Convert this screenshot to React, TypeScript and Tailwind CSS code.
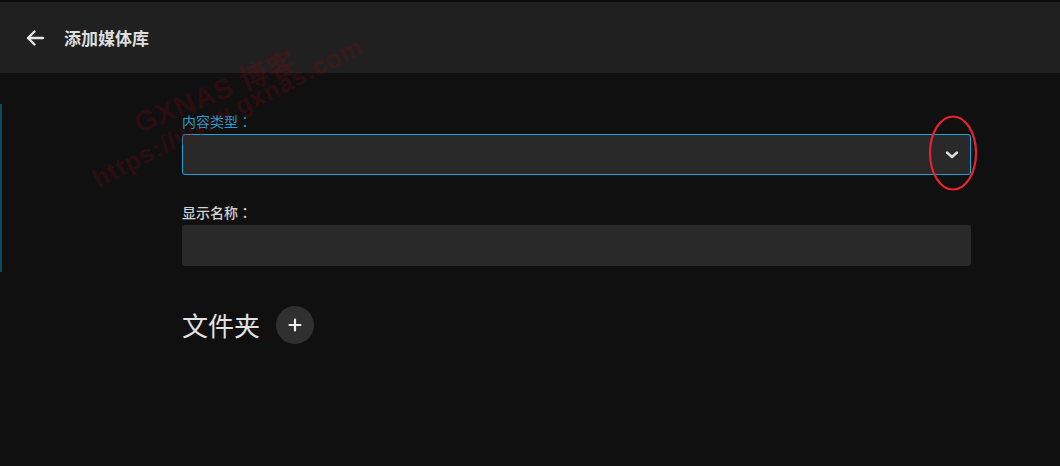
import React from "react";

const cjk = { fontFamily: '"Noto Sans CJK SC", "Noto Sans", sans-serif' };

const Field = ({ label, active }: { label: string; active?: boolean }) => (
  <div className="flex flex-col">
    <div
      className={
        "h-[20px] leading-[20px] text-[14px] mb-[3px] " +
        (active ? "text-[#1ba3d6]" : "text-[#d2d2d2] font-medium")
      }
    >
      {label}
      <span style={{ fontFamily: '"Noto Sans CJK TC", sans-serif' }}>：</span>
    </div>
    <div
      className={
        "h-[41px] rounded-[3px] bg-[#292929] flex items-center justify-end pr-[11px] " +
        (active ? "border border-[#1ba3d6]" : "")
      }
    >
      {active && (
        <svg width="14" height="10" viewBox="0 0 14 10" fill="none">
          <path d="M2 2.5 L7 7 L12 2.5" stroke="#dcdcdc" strokeWidth="2.4" strokeLinecap="round" strokeLinejoin="round" />
        </svg>
      )}
    </div>
  </div>
);

const App = () => {
  return (
    <div className="relative w-[1060px] h-[466px] overflow-hidden bg-[#101010] text-[#e0e0e0]" style={cjk}>
      <div className="h-[2px] bg-[#0c0c0c]" />
      <header className="h-[71px] bg-[#202020] flex items-center">
        <svg className="ml-[25px]" width="20" height="18" viewBox="0 0 20 18" fill="none">
          <path d="M18 9 H3 M9.5 2.5 L3 9 L9.5 15.5" stroke="#e6e6e6" strokeWidth="2.4" strokeLinecap="round" strokeLinejoin="round" />
        </svg>
        <h1 className="ml-[19px] text-[17px] font-semibold text-[#dedede]">添加媒体库</h1>
      </header>

      <main className="pl-[182px] pt-[38px] w-[971px]">
        <Field label="内容类型" active />
        <div className="mt-[27px]">
          <Field label="显示名称" />
        </div>
        <div className="mt-[39px] flex items-center gap-[16px]">
          <h2 className="text-[26px] leading-[40px] text-[#e2e2e2]">文件夹</h2>
          <button className="w-[38px] h-[38px] rounded-full bg-[#303030] flex items-center justify-center">
            <svg width="14" height="14" viewBox="0 0 14 14" fill="none">
              <path d="M7 1.5 V12.5 M1.5 7 H12.5" stroke="#f0f0f0" strokeWidth="2.2" strokeLinecap="round" />
            </svg>
          </button>
        </div>
      </main>

      {/* neighbouring window edge */}
      <div className="absolute left-0 top-[104px] w-[2px] h-[168px] bg-[#0b4e5a]" />

      {/* watermark */}
      <div
        className="absolute left-[136px] top-[108px] leading-[34px] origin-left -rotate-[22deg] text-[28px] font-bold tracking-[1px] text-[#7a0c10]/30 pointer-events-none whitespace-nowrap"
        style={{ fontFamily: '"Liberation Sans", "Noto Sans CJK SC", sans-serif' }}
      >
        GXNAS 博客
      </div>
      <div
        className="absolute left-[94px] top-[164px] leading-[32px] origin-left -rotate-[27deg] text-[25px] font-bold tracking-[1px] text-[#7a0c10]/30 pointer-events-none whitespace-nowrap"
        style={{ fontFamily: '"Liberation Sans", sans-serif' }}
      >
        https://www.gxnas.com
      </div>

      {/* annotation */}
      <svg className="absolute left-[928px] top-[115px]" width="52" height="78" viewBox="0 0 52 78" fill="none">
        <ellipse cx="25" cy="38" rx="23" ry="36.5" stroke="#e8222e" strokeWidth="2.2" />
      </svg>
    </div>
  );
};

export default App;
